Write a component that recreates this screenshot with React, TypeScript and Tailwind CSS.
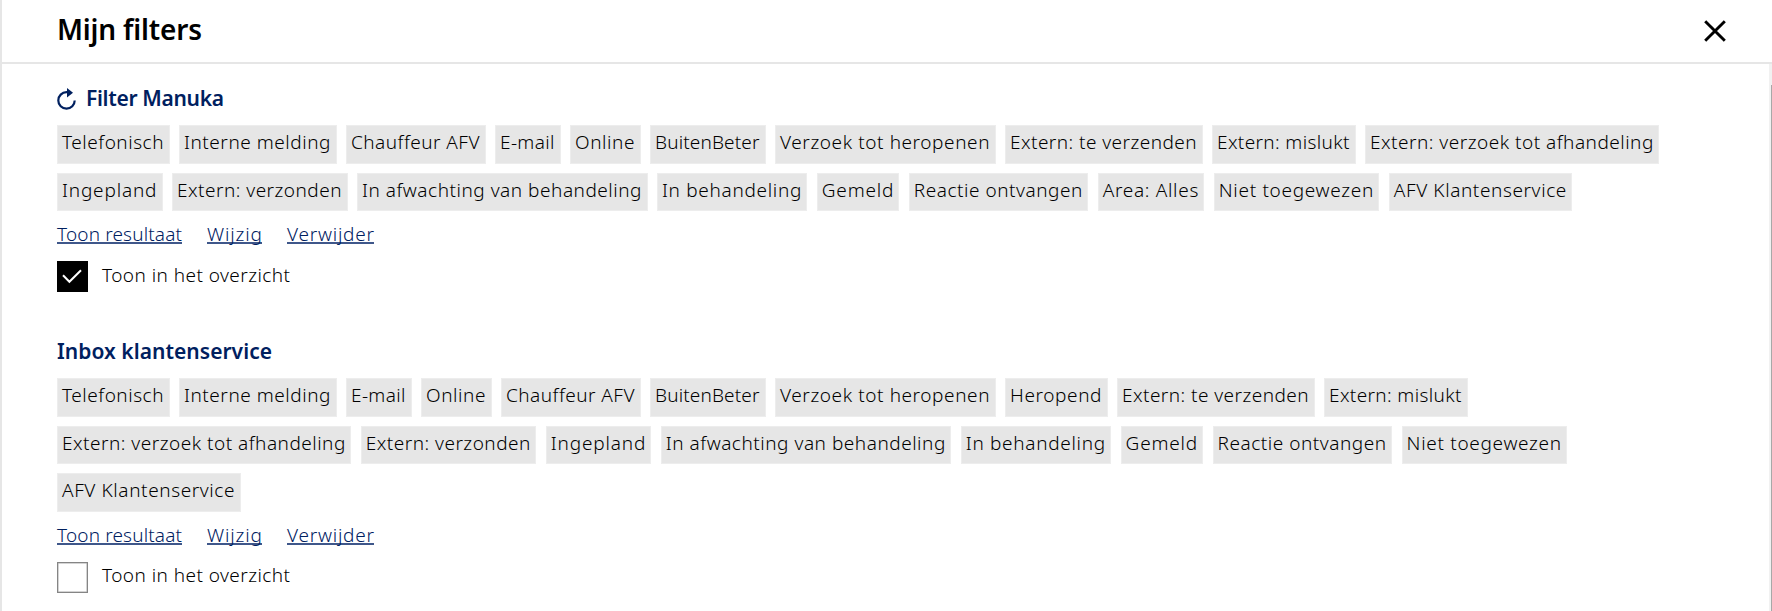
import { useLayoutEffect, useRef, useState } from 'react';

const W: Record<string, string> = {
  Telefonisch: 'w-[112.5px]',
  'Interne melding': 'w-[157.5px]',
  'Chauffeur AFV': 'w-[139.5px]',
  'E-mail': 'w-[65.5px]',
  Online: 'w-[70.5px]',
  BuitenBeter: 'w-[115.5px]',
  'Verzoek tot heropenen': 'w-[220.5px]',
  'Extern: te verzenden': 'w-[197.5px]',
  'Extern: mislukt': 'w-[143.5px]',
  'Extern: verzoek tot afhandeling': 'w-[294.3px]',
  Ingepland: 'w-[105.5px]',
  'Extern: verzonden': 'w-[175.5px]',
  'In afwachting van behandeling': 'w-[290.5px]',
  'In behandeling': 'w-[150.3px]',
  Gemeld: 'w-[82.5px]',
  'Reactie ontvangen': 'w-[179.5px]',
  'Area: Alles': 'w-[106.5px]',
  'Niet toegewezen': 'w-[165.5px]',
  'AFV Klantenservice': 'w-[183.5px]',
  Heropend: 'w-[102.5px]',
};

const manuka: string[][] = [
  ['Telefonisch', 'Interne melding', 'Chauffeur AFV', 'E-mail', 'Online', 'BuitenBeter', 'Verzoek tot heropenen', 'Extern: te verzenden', 'Extern: mislukt', 'Extern: verzoek tot afhandeling'],
  ['Ingepland', 'Extern: verzonden', 'In afwachting van behandeling', 'In behandeling', 'Gemeld', 'Reactie ontvangen', 'Area: Alles', 'Niet toegewezen', 'AFV Klantenservice'],
];
const inbox: string[][] = [
  ['Telefonisch', 'Interne melding', 'E-mail', 'Online', 'Chauffeur AFV', 'BuitenBeter', 'Verzoek tot heropenen', 'Heropend', 'Extern: te verzenden', 'Extern: mislukt'],
  ['Extern: verzoek tot afhandeling', 'Extern: verzonden', 'Ingepland', 'In afwachting van behandeling', 'In behandeling', 'Gemeld', 'Reactie ontvangen', 'Niet toegewezen'],
  ['AFV Klantenservice'],
];

/* Spreads its text over the full width of the box by adjusting letter spacing. */
function Fit({ text, className }: { text: string; className: string }) {
  const box = useRef<HTMLSpanElement>(null);
  const inner = useRef<HTMLSpanElement>(null);
  const [spacing, setSpacing] = useState(0);
  useLayoutEffect(() => {
    if (!box.current || !inner.current) return;
    const room = box.current.getBoundingClientRect().width;
    const used = inner.current.getBoundingClientRect().width;
    setSpacing((room - used) / (text.length - 1));
  }, [text]);
  return (
    <span ref={box} className={`block whitespace-nowrap ${className}`}>
      <span ref={inner} style={{ letterSpacing: `${spacing}px` }}>{text}</span>
    </span>
  );
}

function Chips({ rows }: { rows: string[][] }) {
  return (
    <div className="flex flex-col gap-[9px]">
      {rows.map((row, i) => (
        <div key={i} className="flex gap-[9.5px]">
          {row.map((label) => (
            <div key={label} className={`h-[38.5px] shrink-0 border border-[#ededed] bg-[#e6e6e6] pr-[5px] pl-[4px] text-[19px] leading-[33px] ${W[label]}`}>
              <Fit text={label} className="w-full" />
            </div>
          ))}
        </div>
      ))}
    </div>
  );
}

function Links() {
  return (
    <div className="flex text-[19px] leading-[28px] text-[#00205f]">
      <a className="mr-[25px] border-b-2 border-[#3f578a]"><Fit text="Toon resultaat" className="h-[22px] w-[125px]" /></a>
      <a className="mr-[25px] border-b-2 border-[#3f578a]"><Fit text="Wijzig" className="h-[22px] w-[55px]" /></a>
      <a className="border-b-2 border-[#3f578a]"><Fit text="Verwijder" className="h-[22px] w-[87px]" /></a>
    </div>
  );
}

function Toggle({ checked = false }: { checked?: boolean }) {
  return (
    <div className="flex">
      {checked ? (
        <span className="mr-[14px] size-[31px] bg-black">
          <svg className="size-[31px]" viewBox="0 0 31 31" fill="none" stroke="#fff" strokeWidth="2">
            <path d="M6 14.2 12.4 20.8 24 9.2" />
          </svg>
        </span>
      ) : (
        <span className="mr-[14px] size-[31px] border border-[#858585] shadow-[inset_0_0_0_0.5px_#aaa]" />
      )}
      <Fit text="Toon in het overzicht" className={checked ? 'w-[188px] text-[19px] leading-[29px]' : 'w-[188px] text-[19px] leading-[27px]'} />
    </div>
  );
}

export default function App() {
  return (
    <div className="flex h-[611px] w-[1772px] flex-col overflow-hidden border-l-2 border-[#e6e6e6] bg-white font-['Noto_Sans',sans-serif] font-light text-black">
      <header className="flex h-[64px] shrink-0 justify-between border-b-2 border-[#e6e6e6] pr-[46px] pl-[55px]">
        <h1 className="pt-[9px] text-[28px] leading-10 font-semibold"><Fit text="Mijn filters" className="w-[145px]" /></h1>
        <svg className="mt-[20px] size-[22px]" viewBox="0 0 22 22" stroke="#000" strokeWidth="2.9">
          <path d="M1.2 1.2 20.8 20.8M20.8 1.2 1.2 20.8" />
        </svg>
      </header>
      <div className="flex grow">
        <main className="grow pl-[55px]">
          <section className="h-[253px]">
            <h2 className="flex h-[61px] pt-[20px] text-[21px] leading-7 font-semibold text-[#00205f]">
              <svg className="mt-[4px] mr-[9px] h-[22px] w-[20px]" viewBox="0 0 20 22" fill="none">
                <path d="M12.5 4.2H9.5A8.2 8.2 0 1 0 17.7 12.4" stroke="#00205f" strokeWidth="2.2" />
                <path d="M10 0 16 4.7 10 9.4Z" fill="#00205f" />
              </svg>
              <Fit text="Filter Manuka" className="w-[138px]" />
            </h2>
            <Chips rows={manuka} />
            <div className="pt-[9px]"><Links /></div>
            <div className="pt-[17px]"><Toggle checked /></div>
          </section>
          <section>
            <h2 className="h-[61px] pt-[20px] text-[21px] leading-7 font-semibold text-[#00205f]">
              <Fit text="Inbox klantenservice" className="w-[215px]" />
            </h2>
            <Chips rows={inbox} />
            <div className="pt-[9px]"><Links /></div>
            <div className="pt-[17px]"><Toggle /></div>
          </section>
        </main>
        <div className="w-[3px] shrink-0 bg-[#f1f1f1] pt-[21px] pl-[2px]">
          <div className="h-full bg-[#a8a8a8]" />
        </div>
      </div>
    </div>
  );
}
